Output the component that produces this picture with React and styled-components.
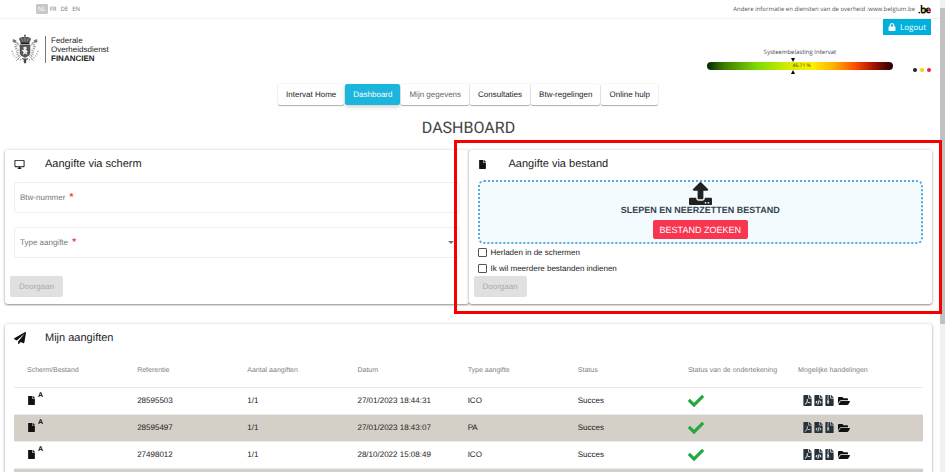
import React from "react";
import styled, { createGlobalStyle, css } from "styled-components";
import {
  FaCheck,
  FaFile,
  FaFileArchive,
  FaFileCode,
  FaFilePdf,
  FaFolderOpen,
  FaLock,
  FaPaperPlane,
  FaUpload,
} from "react-icons/fa";
import { MdOutlineDesktopWindows } from "react-icons/md";

const sans = '"Liberation Sans", Arial, sans-serif';
const humanist = '"Open Sans", "Noto Sans", sans-serif';

const GlobalStyle = createGlobalStyle`
  *, *::before, *::after { box-sizing: border-box; }
  body { margin: 0; background: #fff; color: #333; font-family: ${sans}; font-size: 8px; overflow: hidden; text-rendering: geometricPrecision; }
  button, input, select { font: inherit; text-rendering: inherit; }
`;

const Window = styled.div`
  display: flex;
  height: 100vh;
  overflow: hidden;
`;

const Page = styled.div`
  flex: 1;
  min-width: 0;
`;

const ScrollTrack = styled.div`
  width: 5px;
  padding-top: 8px;
  background: #f1f1f1;
`;

const ScrollThumb = styled.div`
  height: 68%;
  background: #c1c1c1;
`;

const TopBar = styled.div`
  display: flex;
  align-items: center;
  justify-content: space-between;
  height: 19px;
  padding: 0 9px 0 36px;
  border-bottom: 1px solid #f3f3f3;
  font-family: ${humanist};
  color: #555;
`;

const Languages = styled.nav`
  display: flex;
  gap: 4px;
`;

const Language = styled.a`
  color: #777;
  line-height: 10px;
  font-size: 6px;
  text-decoration: none;
  ${(p) =>
    p.$active &&
    css`
      margin-right: -2px;
      padding: 0 2px;
      border-radius: 1px;
      background: #c8c8c8;
      color: #fff;
    `}
`;

const Federal = styled.div`
  display: flex;
  align-items: center;
  gap: 3px;
  font-size: 6px;
  line-height: 8px;
  a {
    color: inherit;
    text-decoration: none;
  }
`;

const Header = styled.header`
  display: flex;
  justify-content: space-between;
  align-items: flex-start;
  height: 65px;
  padding: 0 9px 0 10px;
`;

const Brand = styled.div`
  display: flex;
  align-items: center;
  gap: 5px;
  margin-top: 15px;
`;

const BrandName = styled.div`
  padding-left: 5px;
  border-left: 1px solid #777;
  color: #222;
  line-height: 9px;
`;

const Tools = styled.div`
  display: flex;
  flex-direction: column;
  align-items: flex-end;
  gap: 12px;
`;

const Logout = styled.button`
  display: flex;
  align-items: center;
  gap: 4px;
  height: 16px;
  padding: 0 5px;
  border: 0;
  background: #00b0dc;
  color: #fff;
  font-family: ${humanist};
`;

const LoadRow = styled.div`
  display: flex;
  align-items: flex-end;
  gap: 20px;
`;

const Load = styled.div`
  display: flex;
  flex-direction: column;
  align-items: center;
  width: 186px;
  font-family: ${humanist};
  font-size: 6px;
  line-height: 11px;
  color: #444;
`;

const LoadBar = styled.div`
  position: relative;
  width: 100%;
  height: 8px;
  margin: 4px 0;
  border-radius: 4px;
  background: linear-gradient(90deg, #002800 0%, #3d7a00 9%, #7ddc00 27%, #dcec00 45%, #ffee00 57%, #ffb000 68%, #ff4a00 80%, #a01200 90%, #300000 99%);
`;

const LoadMarker = styled.div`
  position: absolute;
  top: -4px;
  bottom: -4px;
  left: 46%;
  margin-left: -2px;
  display: flex;
  flex-direction: column;
  justify-content: space-between;
  svg {
    display: block;
  }
`;

const LoadValue = styled.span`
  position: absolute;
  left: 46%;
  font-size: 5px;
  line-height: 8px;
  color: #454500;
`;

const Dots = styled.div`
  display: flex;
  gap: 3px;
  padding-bottom: 2px;
`;

const Dot = styled.span`
  width: 4px;
  height: 4px;
  border-radius: 50%;
  background: ${(p) => p.$color};
`;

const Tabs = styled.nav`
  display: flex;
  justify-content: center;
  gap: 1px;
  padding-right: 4px;
`;

const Tab = styled.a`
  padding: 1px 8px 0;
  border-radius: 2px;
  line-height: 20px;
  text-decoration: none;
  white-space: nowrap;
  color: ${(p) => (p.$active ? "#fff" : p.$muted ? "#666" : "#222")};
  background: ${(p) => (p.$active ? "#1cb5dc" : "#fff")};
  box-shadow: ${(p) => (p.$active ? "0 2px 4px rgba(0, 0, 0, 0.18)" : "0 1px 1px rgba(0, 0, 0, 0.3), 0 0 2px rgba(0, 0, 0, 0.12)")};
`;

const Content = styled.main`
  padding: 0 8px 0 5px;
`;

const Heading = styled.h1`
  margin: 12px 0;
  text-align: center;
  font-family: Roboto, sans-serif;
  font-weight: 400;
  font-size: 16px;
  line-height: 21px;
  color: #444;
`;

const Declarations = styled.div`
  display: flex;
  margin-bottom: 20px;
`;

const Column = styled.div`
  position: relative;
  display: flex;
  flex: 1;
  min-width: 0;
`;

const Highlight = styled.div`
  position: absolute;
  inset: -10px -10px -10px -15px;
  border: 3px solid #f80000;
  pointer-events: none;
`;

const Card = styled.section`
  flex: 1;
  min-width: 0;
  padding: 7px 9px;
  border-radius: 3px;
  background: #fff;
  box-shadow: 0 1px 2px rgba(0, 0, 0, 0.4), 0 0 4px rgba(0, 0, 0, 0.12);
`;

const CardTitle = styled.h2`
  display: grid;
  grid-template-columns: 31px 1fr;
  align-items: center;
  height: 14px;
  margin: 0;
  font-size: 11px;
  font-weight: 400;
  line-height: 14px;
  color: #222;
  svg {
    color: #111;
  }
`;

const Field = styled.div`
  display: flex;
  align-items: center;
  gap: 5px;
  height: 31px;
  margin-top: ${(p) => (p.$first ? "11px" : "14px")};
  padding: 0 5px;
  border: 1px solid #eee;
  border-radius: 3px;
  color: #777;
`;

const Required = styled.span`
  margin-left: 2px;
  color: #f33;
  font-size: 10px;
  line-height: 8px;
  font-weight: 700;
`;

const control = css`
  flex: 1;
  min-width: 0;
  height: 20px;
  border: 0;
  outline: 0;
  background: transparent;
`;

const TextInput = styled.input`
  ${control}
`;

const Select = styled.select`
  ${control}
  appearance: none;
`;

const Submit = styled.button`
  display: block;
  height: 21px;
  margin: ${(p) => (p.$tight ? "0" : "18px")} 0 0 -4px;
  padding: 0 9px;
  border: 0;
  border-radius: 2px;
  background: #e0e0e0;
  color: #aaa;
`;

const DropZone = styled.div`
  display: flex;
  flex-direction: column;
  align-items: center;
  height: 64px;
  margin-top: 9px;
  border: 2px dotted #55a9e2;
  border-radius: 6px;
  background: #f4fbff;
  svg {
    flex: none;
    color: #222;
  }
`;

const DropText = styled.strong`
  font-size: 9px;
  line-height: 10px;
  color: #37424f;
`;

const Browse = styled.button`
  height: 19px;
  margin-top: 5px;
  padding: 0 7px;
  border: 0;
  border-radius: 2px;
  background: #f8364f;
  color: #fff;
  font-size: 9px;
`;

const Check = styled.label`
  display: flex;
  align-items: center;
  gap: 4px;
  height: 16px;
  color: #222;
  input {
    appearance: none;
    width: 9px;
    height: 9px;
    margin: 0;
    border: 1px solid #555;
    border-radius: 1px;
    background: #fff;
  }
`;

const Table = styled.table`
  width: 100%;
  margin-top: 10px;
  border-collapse: collapse;
  table-layout: fixed;
  text-align: left;
  th,
  td {
    width: 12.12%;
    padding: 0 0 0 13px;
    white-space: nowrap;
  }
  th:last-child {
    width: auto;
  }
  th {
    height: 32px;
    border-bottom: 1px solid #e8e8e8;
    font-size: 7px;
    font-weight: 400;
    color: #808080;
  }
`;

const Row = styled.tr`
  height: 27px;
  border-bottom: 1px solid #ededed;
  color: #222;
  background: #fff;
  &:nth-child(even) {
    background: #d5d0c7;
  }
`;

const Kind = styled.span`
  display: flex;
  align-items: flex-start;
  gap: 2px;
  padding-bottom: 4px;
  svg {
    margin-top: 4px;
  }
  b {
    font-size: 7px;
    line-height: 7px;
    color: #000;
  }
`;

const Actions = styled.span`
  display: flex;
  align-items: center;
  padding-left: 4px;
  color: #26313a;
`;

const IconButton = styled.button`
  display: flex;
  padding: 0;
  border: 0;
  background: none;
  color: inherit;
  &:last-child {
    margin-left: 3px;
    color: #111;
  }
`;

const SuccessIcon = styled(FaCheck)`
  display: block;
  color: #23a942;
`;

function CoatOfArms() {
  return (
    <svg width="30" height="30" viewBox="0 0 60 60" fill="none" stroke="#444" role="img" aria-label="Wapenschild">
      <path d="M9 13 48 54M51 13 12 54" strokeWidth="2" stroke="#aaa" />
      <path d="M4 34c3 11 9 16 20 18M56 34c-3 11-9 16-20 18" strokeWidth="3" strokeDasharray="2 3" stroke="#999" />
      <path d="M16 18c-7 5-5 10-2 13s-3 8 5 14M44 18c7 5 5 10 2 13s3 8-5 14" strokeWidth="5" strokeDasharray="2 2" stroke="#999" />
      <path d="m6 10 7 3-2 5-6-2zM54 10l-7 3 2 5 6-2z" fill="#777" stroke="none" />
      <path d="M18 10c2-6 22-6 24 0l-4 9H22z" fill="#555" stroke="none" />
      <path d="M23 9l3 6M30 7v8M37 9l-3 6" stroke="#ccc" strokeWidth="1" />
      <path d="M30 1v5M28 3h4" strokeWidth="1.500" />
      <path d="M21 19h18" strokeWidth="3" stroke="#222" />
      <path d="M20 22h20v16c0 4-4 6-10 9-6-3-10-5-10-9z" fill="#555" />
      <path d="m26 27 5-2 3 3-2 3 4 5-3 1 2 5-5-3-4 3 1-6-4-3 5-2z" fill="#eee" stroke="none" />
      <path d="M24 49c4 3 8 3 12 0M28 53h4l-1 5h-2z" strokeWidth="2" fill="#555" />
    </svg>
  );
}

function BelgiumLogo() {
  return (
    <svg width="13" height="10" viewBox="0 0 26 20" fill="none" strokeWidth="3.4" role="img" aria-label="belgium.be">
      <circle cx="2.5" cy="17" r="1.700" fill="#111" />
      <path d="M9 9h4a4 4 0 0 1 0 8H9z" fill="#fc0" />
      <path d="M7 2v15M7 9.500c4-2.500 8-1 8 3.500s-4 6-8 3.500" stroke="#111" strokeWidth="3" />
      <path d="M17 13h7c0-6-7-6-7 0 0 5 5 5 8 3" stroke="#111" strokeWidth="3" />
      <path d="M20 13h4c0-3-2-4-4-4" stroke="#e5203a" strokeWidth="2.400" />
    </svg>
  );
}

const tabs = ["Intervat Home", "Dashboard", "Mijn gegevens", "Consultaties", "Btw-regelingen", "Online hulp"];

const columns = [
  "Scherm/Bestand",
  "Referentie",
  "Aantal aangiften",
  "Datum",
  "Type aangifte",
  "Status",
  "Status van de ondertekening",
  "Mogelijke handelingen",
];

const rows = [
  { reference: "28595503", date: "27/01/2023 18:44:31", type: "ICO" },
  { reference: "28595497", date: "27/01/2023 18:43:07", type: "PA" },
  { reference: "27498012", date: "28/10/2022 15:08:49", type: "ICO" },
];

const actions = [
  { label: "PDF", Icon: FaFilePdf, size: 11 },
  { label: "XML", Icon: FaFileCode, size: 11 },
  { label: "ZIP", Icon: FaFileArchive, size: 11 },
  { label: "Openen", Icon: FaFolderOpen, size: 12 },
];

export default function App() {
  return (
    <Window>
      <GlobalStyle />
      <Page>
        <TopBar>
          <Languages aria-label="Taal">
            {["NL", "FR", "DE", "EN"].map((code) => (
              <Language key={code} href={`#${code}`} $active={code === "NL"}>
                {code}
              </Language>
            ))}
          </Languages>
          <Federal>
            <span>
              Andere informatie en diensten van de overheid :<a href="#belgium">www.belgium.be</a>
            </span>
            <BelgiumLogo />
          </Federal>
        </TopBar>

        <Header>
          <Brand>
            <CoatOfArms />
            <BrandName>
              Federale
              <br />
              Overheidsdienst
              <br />
              <b>FINANCIEN</b>
            </BrandName>
          </Brand>
          <Tools>
            <Logout type="button">
              <FaLock size={8} />
              Logout
            </Logout>
            <LoadRow>
              <Load>
                Systeembelasting Intervat
                <LoadBar>
                  <LoadMarker>
                    <svg width="4" height="4" viewBox="0 0 4 4">
                      <path d="M0 0h4L2 4z" />
                    </svg>
                    <svg width="4" height="4" viewBox="0 0 4 4">
                      <path d="M0 4h4L2 0z" />
                    </svg>
                  </LoadMarker>
                  <LoadValue>46.71 %</LoadValue>
                </LoadBar>
              </Load>
              <Dots>
                <Dot $color="#222" />
                <Dot $color="#fc0" />
                <Dot $color="#f02040" />
              </Dots>
            </LoadRow>
          </Tools>
        </Header>

        <Tabs aria-label="Hoofdmenu">
          {tabs.map((tab) => (
            <Tab key={tab} href="#" $active={tab === "Dashboard"} $muted={tab === "Mijn gegevens"}>
              {tab}
            </Tab>
          ))}
        </Tabs>

        <Content>
          <Heading>DASHBOARD</Heading>
          <Declarations>
            <Column>
              <Card>
                <CardTitle>
                  <MdOutlineDesktopWindows size={11} />
                  Aangifte via scherm
                </CardTitle>
                <Field $first>
                  <label htmlFor="vat">
                    Btw-nummer <Required>*</Required>
                  </label>
                  <TextInput id="vat" required />
                </Field>
                <Field>
                  <label htmlFor="type">
                    Type aangifte <Required>*</Required>
                  </label>
                  <Select id="type" required defaultValue="">
                    <option value="" />
                    <option>ICO</option>
                    <option>PA</option>
                  </Select>
                  <svg width="6" height="3" viewBox="0 0 6 3" fill="#777" aria-hidden="true">
                    <path d="M0 0h6L3 3z" />
                  </svg>
                </Field>
                <Submit type="button" disabled>
                  Doorgaan
                </Submit>
              </Card>
            </Column>
            <Column>
              <Card>
                <CardTitle>
                  <FaFile size={9} />
                  Aangifte via bestand
                </CardTitle>
                <DropZone>
                  <FaUpload size={23} />
                  <DropText>SLEPEN EN NEERZETTEN BESTAND</DropText>
                  <Browse type="button">BESTAND ZOEKEN</Browse>
                </DropZone>
                <Check>
                  <input type="checkbox" />
                  Herladen in de schermen
                </Check>
                <Check>
                  <input type="checkbox" />
                  Ik wil meerdere bestanden indienen
                </Check>
                <Submit type="button" disabled $tight>
                  Doorgaan
                </Submit>
              </Card>
              <Highlight />
            </Column>
          </Declarations>

          <Card>
            <CardTitle>
              <FaPaperPlane size={12} />
              Mijn aangiften
            </CardTitle>
            <Table>
              <thead>
                <tr>
                  {columns.map((name) => (
                    <th key={name} scope="col">
                      {name}
                    </th>
                  ))}
                </tr>
              </thead>
              <tbody>
                {rows.map((row) => (
                  <Row key={row.reference}>
                    <td>
                      <Kind>
                        <FaFile size={9} color="#111" />
                        <b>A</b>
                      </Kind>
                    </td>
                    <td>{row.reference}</td>
                    <td>1/1</td>
                    <td>{row.date}</td>
                    <td>{row.type}</td>
                    <td>Succes</td>
                    <td>
                      <SuccessIcon size={16} />
                    </td>
                    <td>
                      <Actions>
                        {actions.map(({ label, Icon, size }) => (
                          <IconButton key={label} type="button" aria-label={label}>
                            <Icon size={size} />
                          </IconButton>
                        ))}
                      </Actions>
                    </td>
                  </Row>
                ))}
                <Row>
                  <td colSpan={8} />
                </Row>
              </tbody>
            </Table>
          </Card>
        </Content>
      </Page>
      <ScrollTrack aria-hidden="true">
        <ScrollThumb />
      </ScrollTrack>
    </Window>
  );
}
